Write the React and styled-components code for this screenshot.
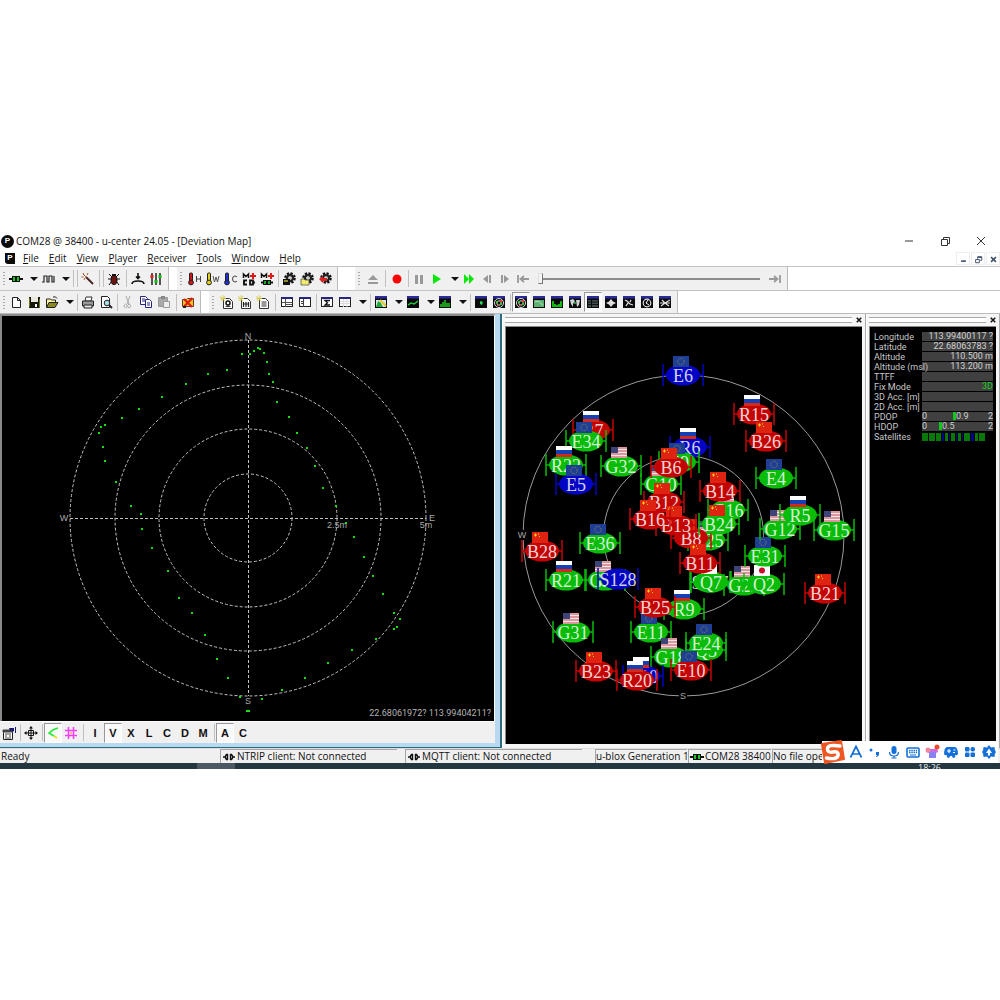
import React from "react";
import styled, { createGlobalStyle, css } from "styled-components";

const ui = '"Open Sans", "Noto Sans", sans-serif';
const plain = '"Liberation Sans", Arial, sans-serif';

const GlobalStyle = createGlobalStyle`
  * { box-sizing: border-box; }
  body { margin: 0; background: #fff; font-family: ${ui}; font-size: 10px; color: #111; }
  button { border: 0; background: none; padding: 0; margin: 0; font: inherit; color: inherit; }
`;

const Page = styled.main`
  padding-top: 232px;
  overflow: hidden;
`;
const AppWindow = styled.div`
  position: relative;
  display: flex;
  flex-direction: column;
`;

/* ---------- title and menu ---------- */
const TitleBar = styled.header`
  display: flex;
  align-items: center;
  height: 18px;
  padding: 0 1px;
`;
const Logo = styled.span`
  display: grid;
  place-items: center;
  width: ${(p) => (p.$square ? 10 : 13)}px;
  height: ${(p) => (p.$square ? 11 : 13)}px;
  margin-right: ${(p) => (p.$square ? 8 : 2)}px;
  border-radius: ${(p) => (p.$square ? "0 0 0 3px" : "50%")};
  background: #0b0b0b;
  color: #fff;
  font: bold 8px/10px ${plain};
`;
const Title = styled.h1`
  flex: 1;
  margin: 0;
  font-size: 10px;
  font-weight: 400;
  line-height: 18px;
  white-space: nowrap;
`;
const WindowButton = styled.button`
  display: grid;
  place-items: center;
  width: 36px;
  height: 18px;
  color: #222;
`;
const MenuBar = styled.nav`
  display: flex;
  align-items: center;
  height: 16px;
  padding-left: 5px;
`;
const MenuItem = styled.button`
  margin-right: 10px;
  line-height: 16px;
  &::first-letter { text-decoration: underline; }
`;
const MdiButtons = styled.div`
  display: flex;
  gap: 1px;
  margin-left: auto;
`;
const MdiButton = styled.button`
  display: grid;
  place-items: center;
  width: 14px;
  height: 13px;
  border: 1px solid #eee;
  color: #43526b;
`;

/* ---------- toolbars ---------- */
const ToolRow = styled.div`
  display: flex;
  height: ${(p) => p.$height || 23}px;
  border-top: 1px solid #c4c4c4;
`;
const ToolBand = styled.div`
  display: flex;
  align-items: center;
  padding: 0 3px 0 2px;
  margin-right: ${(p) => p.$gap || 0}px;
  background: #f0f0f0;
  border-right: 1px solid #bcbcbc;
`;
const Grip = styled.span`
  width: ${(p) => p.$width || 7}px;
  height: 15px;
  background: radial-gradient(circle, #aaa 1px, transparent 1px) 0 0 / 4px 3px repeat-y;
`;
const ToolButton = styled.button`
  display: grid;
  place-items: center;
  flex: none;
  width: ${(p) => (p.$drop ? 14 : 18)}px;
  height: 20px;
  font: bold 11px/18px ${plain};
  border: 1px solid transparent;
  ${(p) => p.$pressed && css`
    background: #f9f9f9;
    border-color: #999 #fff #fff #999;
  `}
`;
const Divider = styled.span`
  display: flex;
  justify-content: center;
  flex: none;
  width: ${(p) => (p.$wide ? 6 : 4)}px;
  height: 17px;
  &::before {
    content: "";
    border-left: 1px solid #c0c0c0;
  }
`;
const SeekBar = styled.input`
  appearance: none;
  width: 222px;
  height: 16px;
  margin: 0 6px;
  background: linear-gradient(#8c8c8c, #8c8c8c) center / 100% 2px no-repeat;
  &::-webkit-slider-thumb {
    appearance: none;
    width: 5px;
    height: 11px;
    background: #f4f4f4;
    border: 1px solid #777;
    border-color: #ddd #777 #777 #ddd;
  }
`;

/* ---------- workspace ---------- */
const Workspace = styled.div`
  display: grid;
  grid-template-columns: minmax(0, 1fr) 364px 134px;
  border-top: 1px solid #bbb;
  background: #f0f0f0;
`;
const MapWindow = styled.section`
  display: flex;
  flex-direction: column;
  border: solid #2c6a7d;
  border-width: 0 2px 1px 0;
  background: #b9d8f2;
  padding: 0 5px 4px 0;
`;
const MapCanvas = styled.svg`
  display: block;
  width: 100%;
  height: 407px;
  background: #000;
  border: solid #8a8a8a;
  border-width: 2px 0 0 2px;
  border-right: 1px solid #fff;
`;
const MapTools = styled.div`
  display: flex;
  align-items: center;
  height: 22px;
  background: #f0f0f0;
  border-top: 1px solid #fff;
`;
const Dock = styled.section`
  display: flex;
  flex-direction: column;
  padding: 0 0 4px 2px;
  border-left: 1px solid #fff;
  border-right: 1px solid #aaa;
  background: #f5f5f5;
`;
const DockHead = styled.header`
  display: flex;
  align-items: center;
  gap: 1px;
  height: 12px;
  &::before {
    content: "";
    flex: 1;
    height: 4px;
    border: solid #aaa;
    border-width: 1px 0;
    background: #fff;
  }
`;
const DockBody = styled.div`
  flex: 1;
  margin-right: 3px;
  background: #000;
  border: solid #888;
  border-width: 1px 0 0 1px;
  padding: ${(p) => (p.$inset ? "5px 3px 0 4px" : "0")};
`;
const SkyCanvas = styled.svg`
  display: block;
  width: 100%;
  height: 416px;
`;

const InfoTable = styled.table`
  width: 100%;
  border-collapse: collapse;
  table-layout: fixed;
  font: 9px/9px Roboto, ${plain};
  color: #c8c8c8;
  th, td { height: 10px; padding: 0; font-weight: 400; white-space: nowrap; }
  th { width: 48px; text-align: left; }
  td { text-align: right; }
`;
const Value = styled.div`
  height: 9px;
  margin-bottom: 1px;
  background: #404040;
  color: ${(p) => p.$color || "#d0d0d0"};
`;
const Gauge = styled(Value)`
  display: grid;
  grid-template-columns: ${(p) => p.$at}px 1fr auto;
  text-align: left;
  b { font-weight: 400; border-left: 3px solid #10c818; line-height: 9px; height: 8px; }
`;
const SatBars = styled.div`
  display: flex;
  gap: 1px;
  height: 8px;
`;
const SatBar = styled.i`
  width: ${(p) => p.$w}px;
  background: ${(p) => (p.$blue ? "#000090" : "#087808")};
`;

/* ---------- status bar, input bar, taskbar ---------- */
const StatusBar = styled.footer`
  display: flex;
  height: 15px;
  padding-right: 2px;
  background: #f0f0f0;
  border-top: 1px solid #ddd;
`;
const Pane = styled.div`
  display: flex;
  align-items: center;
  flex: ${(p) => (p.$w ? "none" : "1")};
  width: ${(p) => (p.$w ? p.$w + "px" : "auto")};
  margin-right: ${(p) => p.$gap || 0}px;
  padding-left: 1px;
  overflow: hidden;
  white-space: nowrap;
  line-height: 13px;
  ${(p) => p.$sunken && css`
    padding-left: 0;
    border: solid #a5a5a5;
    border-width: 1px 0 0 1px;
  `}
`;
const InputBar = styled.div`
  position: absolute;
  right: 2px;
  bottom: 6px;
  display: flex;
  align-items: center;
  height: 22px;
  padding-left: 24px;
  background: #fff;
`;
const InputLogo = styled.div`
  position: absolute;
  left: -2px;
  top: -2px;
`;
const InputButton = styled.button`
  display: grid;
  place-items: center;
  width: 19px;
  height: 22px;
`;
const Taskbar = styled.div`
  display: flex;
  height: 6px;
  overflow: hidden;
  background: #243640;
  color: #e4eaee;
  font: 9px/10px ${ui};
`;
const TaskSlot = styled.span`
  width: 38px;
  margin-left: 197px;
  background: #4d5962;
`;
const Clock = styled.span`
  margin-left: auto;
  margin-right: 59px;
`;

/* ---------- icons ---------- */
const plug = (
  <>
    <path d="M1 8h14" stroke="#111" strokeWidth="2" />
    <path d="M4 5h8v6H4z" fill="#111" />
    <path d="M5 6h2v4H5zM9 6h2v4H9z" fill="#18c828" />
  </>
);
const thermo = (color, letter) => (
  <>
    <rect x="2.500" y="2" width="3" height="9" rx="1" fill={color} stroke="#222" />
    <circle cx="4" cy="11.500" r="2.400" fill={color} stroke="#222" />
    {letter}
  </>
);
const screen = (inner) => (
  <>
    <rect x="2" y="3" width="12" height="11" fill="#0a0a0a" />
    <rect x="2" y="2" width="12" height="2.500" fill="#2c2c98" />
    {inner}
  </>
);
const gear = (inner) => (
  <>
    <circle cx="9" cy="7" r="4.600" fill="none" stroke="#111" strokeWidth="2.400" strokeDasharray="2.200 1.400" />
    <circle cx="9" cy="7" r="3" fill="none" stroke="#222" strokeWidth="2.400" />
    <circle cx="9" cy="7" r="1.500" fill="#ccc" />
    {inner}
  </>
);
const sheet = (inner) => (
  <>
    <path d="M4.500 4.500h6l3 3v7h-9z" fill="#fff" stroke="#333" />
    <path d="M1 2l5 5M6 2L2 7M4 1v6M1 4.500h6" stroke="#d4cc45" strokeWidth=".8" />
    {inner}
  </>
);
const pane = (inner) => (
  <>
    <rect x="2.500" y="3.500" width="11" height="9" fill="#fff" stroke="#222" />
    <rect x="2" y="3" width="12" height="2" fill="#252580" />
    {inner}
  </>
);
const dish = (
  <>
    <circle cx="8" cy="9" r="4.500" fill="none" stroke="#ddd" />
    <circle cx="8" cy="9" r="2.200" fill="none" stroke="#ddd" />
    <path d="M5 7h2v2H5zM9 9h2v2H9z" fill="#2bd12b" />
    <path d="M9 6h2v2H9zM6 11h2v1H6z" fill="#e33" />
  </>
);

const icons = {
  plug,
  drop: <path d="M4 6h8l-4 4z" fill="#111" />,
  wave: <path d="M2 11h2V5h3v6h2V5h3v6h2V5" fill="none" stroke="#222" strokeWidth="1.200" />,
  wand: (
    <>
      <path d="M6 6l7 7" stroke="#4a2525" strokeWidth="2" />
      <path d="M3 2l1 2M8 2L7 4M1.500 6h2M4 9l1-2M3 3l3 3" stroke="#a55a2a" strokeWidth="1" />
    </>
  ),
  bug: (
    <>
      <path d="M3 3l3 3M13 3l-3 3M2 8h12M3 14l3-4M13 14l-3-4" stroke="#111" />
      <ellipse cx="8" cy="9" rx="3" ry="4.500" fill="#6b1410" stroke="#111" />
      <path d="M6 3h4v2H6z" fill="#111" />
    </>
  ),
  antenna: <path d="M8 2v5M6 5.500l2 2 2-2M2 13q0-3 6-3t6 3" fill="none" stroke="#111" strokeWidth="1.600" />,
  sliders: (
    <>
      <path d="M4 2v12M8 2v12M12 2v12" stroke="#111" strokeWidth="1.400" />
      <path d="M2.500 4h3v3h-3z" fill="#d22" />
      <path d="M6.500 9h3v3h-3z" fill="#1b1" />
      <path d="M10.500 4h3v3h-3z" fill="#1b1" />
    </>
  ),
  thermoH: thermo("#d01818", <path d="M9.500 5v6M13.500 5v6M9.500 8h4" stroke="#444" fill="none" />),
  thermoW: thermo("#e0d020", <path d="M8 5l1.500 6L11 6l1.500 5L14 5" stroke="#555" fill="none" />),
  thermoC: thermo("#2030d0", <path d="M14 6q-1-1-2-1-2.500 0-2.500 3t2.500 3q1 0 2-1" stroke="#444" fill="none" />),
  linkAdd: (
    <>
      <path d="M2.500 7V3L5 5.500 7.500 3v4" fill="none" stroke="#111" strokeWidth="1.500" />
      <path d="M12 2v6M9 5h6" stroke="#e01818" strokeWidth="2" />
      <path d="M6 9.500H3v4h3M2 11.500h2M9 9.500h3v4H9zM12 11.500h2" fill="none" stroke="#111" strokeWidth="1.800" />
    </>
  ),
  linkGreen: (
    <>
      <path d="M2.500 7V3L5 5.500 7.500 3v4" fill="none" stroke="#111" strokeWidth="1.500" />
      <path d="M12 2v6M9 5h6" stroke="#e01818" strokeWidth="2" />
      <path d="M2 11.500h12" stroke="#111" strokeWidth="2" />
      <path d="M4 9h8v5H4z" fill="#111" />
      <path d="M5 10h2v3H5zM9 10h2v3H9z" fill="#18a828" />
    </>
  ),
  gearSave: gear(<><path d="M2 8h7v6H2z" fill="#111" /><path d="M3 9h4v2H3z" fill="#8a8a28" /></>),
  gearOpen: gear(<path d="M2 8h3l1 1h4v5H2z" fill="#f0ea70" stroke="#443" strokeWidth=".7" />),
  gearBack: gear(<path d="M2 8l4-3v2h4v3H6v2z" fill="#e02020" />),
  eject: <path d="M3 9l5-5 5 5zM3 11h10v2H3z" fill="#999" />,
  record: <circle cx="8" cy="8" r="4.500" fill="#f80606" />,
  pause: <path d="M4 4h3v9H4zM9 4h3v9H9z" fill="#999" />,
  play: <path d="M4 3l8 5-8 5z" fill="#08e808" />,
  forward: <path d="M3 3l5 5-5 5zM8 3l5 5-5 5z" fill="#08e808" />,
  stepBack: <path d="M9 4v8L4 8zM10 4h2v8h-2z" fill="#999" />,
  stepOn: <path d="M4 4h2v8H4zM7 4v8l5-4z" fill="#999" />,
  toStart: <path d="M3 4v8M14 8H6M9 5L5.500 8 9 11" fill="none" stroke="#999" strokeWidth="1.800" />,
  toEnd: <path d="M13 4v8M2 8h8M7 5l3.500 3L7 11" fill="none" stroke="#999" strokeWidth="1.800" />,
  page: <path d="M4.500 3.500h5l3 3v7h-8zM9.500 3.500v3h3" fill="#fff" stroke="#222" />,
  save: (
    <>
      <path d="M3 3h11v11H3z" fill="#16160a" />
      <path d="M5 3h7v5H5z" fill="#e8e8e0" />
      <path d="M3.500 4v9M13.500 5v9" stroke="#6d7414" />
      <path d="M9 10h2v3H9z" fill="#fff" />
    </>
  ),
  open: (
    <>
      <path d="M2.500 13V5h4l1 1h4v2" fill="#fbf6a0" stroke="#222" />
      <path d="M2.500 13.500L5 8.500h9l-3 5z" fill="#8b8b1c" stroke="#222" />
      <path d="M9 3q3-1 4 1.500" fill="none" stroke="#222" />
    </>
  ),
  print: (
    <>
      <path d="M5 7l1-4h6l-1 4z" fill="#fff" stroke="#333" />
      <path d="M2.500 7h11v5h-11z" fill="#9a9a9a" stroke="#222" />
      <path d="M4 11h8v3H4z" fill="#e4e4e4" stroke="#222" />
    </>
  ),
  preview: (
    <>
      <path d="M3.500 2.500h6l2 2v9h-8z" fill="#fff" stroke="#222" />
      <circle cx="9" cy="9" r="2.800" fill="#a8dfe2" stroke="#222" />
      <path d="M11 11l3 3" stroke="#222" strokeWidth="1.800" />
    </>
  ),
  cut: <path d="M6 2l3 8M10 2L7 10M6.500 10.500a1.500 1.800 0 1 0 0 3 1.500 1.800 0 0 0 0-3M10 10.500a1.500 1.800 0 1 0 0 3 1.500 1.800 0 0 0 0-3" fill="none" stroke="#aaa" />,
  copy: (
    <>
      <path d="M2.500 2.500h5l2 2v6h-7z" fill="#fff" stroke="#24247c" />
      <path d="M7.500 5.500h4l2 2v6h-6z" fill="#fff" stroke="#24247c" />
      <path d="M4 5h3M4 7h3M9 9h3M9 11h3" stroke="#24247c" />
    </>
  ),
  paste: (
    <>
      <path d="M2.500 3.500h9v9h-9z" fill="#aaa" stroke="#999" />
      <path d="M5 2h4v3H5z" fill="#888" />
      <path d="M7.500 7.500h6v6h-6z" fill="#eee" stroke="#999" />
    </>
  ),
  clear: (
    <>
      <path d="M2.500 5.500h4l1-1h6v8h-11z" fill="#e8c818" stroke="#733" />
      <path d="M4 5l8 8M12.500 4L4 12.500" stroke="#e01818" strokeWidth="2.200" />
      <path d="M3 12h3v2H3z" fill="#222" />
    </>
  ),
  sheetImage: sheet(<><circle cx="9" cy="9" r="2" fill="none" stroke="#111" strokeWidth="1.500" /><path d="M6 13l3-2 3 2z" fill="#333" /></>),
  sheetCode: sheet(<path d="M6.500 8v5M9 8v5M11.500 8v5M6 10h6" stroke="#222" strokeWidth="1.200" />),
  sheetText: sheet(<path d="M6.500 8h5M6.500 10h5M6.500 12h5" stroke="#333" />),
  paneRows: pane(<path d="M6.500 5v8M3 8.500h10M7 10.500h6" stroke="#555" fill="none" />),
  paneSide: pane(<path d="M6.500 5v8M4 7.500h2M4 9.500h2" stroke="#444" fill="none" />),
  paneSum: pane(<path d="M11 6.500H6l2.500 2.200L6 11h5" fill="none" stroke="#111" strokeWidth="1.300" />),
  paneGrid: pane(<path d="M3 7.500h10M3 9.500h10M6.500 5v8M10 5v8" stroke="#ddd" />),
  chart: screen(<><path d="M3 6h10v7H3z" fill="#d8ecf0" /><path d="M3 13l2-6 3 2 2 4z" fill="#22a838" /><path d="M7 6l6 6" stroke="#e8c820" strokeWidth="2" /></>),
  line: screen(<path d="M3 11l3-2 3 1 4-3" fill="none" stroke="#20d840" strokeWidth="1.300" />),
  bars: screen(<path d="M4 13v-3M6 13V8M8 13V6M10 13V9M12 13v-4" stroke="#20d820" strokeWidth="1.400" />),
  dot: screen(<path d="M7 7l3 1-1 3-2-1z" fill="#20d860" />),
  sky: screen(dish),
  map: screen(<><path d="M3 6h10v7H3z" fill="#5fb073" /><path d="M4 8l3-1 5 4" stroke="#bde0b8" fill="none" /></>),
  histogram: screen(<path d="M4 13V7M6 13v-3M8 13v-2M10 13v-3M12 13V7" stroke="#12e812" strokeWidth="1.600" />),
  world: screen(<><path d="M3 6l3-1 2 2-2 3v3l-2-3zM9 6l4 0-1 5-2 2z" fill="#cfcfcf" /><path d="M7 8h2v2H7z" fill="#27903a" /></>),
  table: screen(<><path d="M3 6h3v7H3zM7 6h6v7H7z" fill="#3e4e4e" /><path d="M3 8h10M3 10.500h10" stroke="#141414" /></>),
  compass: screen(<path d="M8 5l2 2.500 3 1.500-3 1.500L8 13l-2-2.500L3 9l3-1.500z" fill="#e0e0e0" />),
  needle: screen(<path d="M4 6l2 1 3 3 3 1M5 12l2-3M10 6l-1 2" stroke="#e0e0e0" fill="none" strokeWidth="1.300" />),
  clock: screen(<><circle cx="8" cy="9" r="3.800" fill="none" stroke="#ddd" strokeWidth="1.200" /><path d="M9 6L7 9l3 2" stroke="#fff" fill="none" /></>),
  star: screen(<path d="M4 12l4-3 5-3M5 6l3 3 4 3M3 9h10" stroke="#ddd" fill="none" strokeWidth="1.200" />),
  props: (
    <>
      <path d="M2.500 5.500h9v9h-9z" fill="#fff" stroke="#222" />
      <path d="M2 5h10v2H2zM4 9h6M4 11h2M8 11h2M4 13h6" fill="#444" stroke="#444" />
      <path d="M8 3h5v3h-4zM14 2h1v6h-1z" fill="#1a1a6e" />
    </>
  ),
  move: (
    <>
      <path d="M8 2v12M2 8h12M5.500 5.500h5v5h-5z" stroke="#111" fill="none" />
      <path d="M8 1l2 2.500H6zM8 15l2-2.500H6zM1 8l2.500-2v4zM15 8l-2.500-2v4z" fill="#111" />
    </>
  ),
  track: <><path d="M13 3Q8 4 4 8l5 3" fill="none" stroke="#24e83a" strokeWidth="1.600" /><path d="M9 11l3 2" stroke="#e6e020" strokeWidth="2" /></>,
  grid: <><path d="M5.500 2v12M10.500 2v12M2 5.500h12M2 10.500h12" stroke="#f53cf5" strokeWidth="1.500" /><path d="M7 7h2v2H7z" fill="#f6c060" /></>,
  unlinked: <path d="M2 8h2M12 8h2M7 5.500H5.500L4.500 7v2l1 1.500H7M6.500 5v6M9.500 5v6M9 5.500h1.500l1 1.500v2l-1 1.500H9" fill="none" stroke="#111" strokeWidth="1.400" />,
  minimize: <path d="M4 8h8" stroke="#333" />,
  restore: <path d="M4.500 6.500h6v6h-6zM6.500 6V4.500h6v6H11" fill="none" stroke="#333" />,
  close: <path d="M4 4l8 8M12 4l-8 8" stroke="#333" />,
  mdiMin: <path d="M5 10h6" stroke="#43526b" strokeWidth="2" />,
  mdiRestore: <path d="M4.500 8h4.500v4H4.500zM7 7V4.500h5v4.500h-2M7 5.500h5" fill="none" stroke="#43526b" strokeWidth="1.200" />,
  mdiClose: <path d="M5 5l6 6M11 5l-6 6" stroke="#43526b" strokeWidth="2" />,
  dockClose: <path d="M5 5l6 6M11 5l-6 6" stroke="#111" strokeWidth="2" />,
  imeA: <path d="M2.500 13.500L8 2.500l5.500 11M4.500 10h7" fill="none" stroke="#1470d8" strokeWidth="1.700" />,
  imePunct: <><circle cx="4" cy="6" r="1.500" fill="#1470d8" /><path d="M9 8h3v3l-2 2h-1l1-2H9z" fill="#1470d8" /></>,
  imeMic: <><rect x="5.500" y="2" width="5" height="8" rx="2.500" fill="#1470d8" /><path d="M3.500 8q0 4 4.500 4t4.500-4M8 12v2.500M5.500 14h5" fill="none" stroke="#1470d8" strokeWidth="1.200" /></>,
  imeKeys: <><rect x="2" y="4" width="12" height="9" rx="1" fill="none" stroke="#1470d8" strokeWidth="1.600" /><path d="M4 6.500h8M4 8.500h8" stroke="#1470d8" strokeDasharray="1.500 .8" strokeWidth="1.300" /><path d="M5 11h6" stroke="#1470d8" /></>,
  imeSkin: <><path d="M2 4l4 1h4l3-1 1 4-2 1v5H5V9L2 8z" fill="#cc6ae0" /><path d="M5 8h7v6H5z" fill="#8a80f0" /><circle cx="4" cy="6" r="2.500" fill="#f08a9a" /><circle cx="13" cy="3" r="2.500" fill="#f04a2c" /></>,
  imeGame: <><path d="M4 3h8q3 1 3 7-1 2-3 1 1 2-1 3-2 0-2-2H7q0 2-2 2-2-1-1-3-2 1-3-1 0-6 3-7z" fill="#1470d8" /><path d="M4 7h4M6 5v4M10.500 6h2M10 8.500h2" stroke="#fff" strokeWidth="1.200" /></>,
  imeApps: <g fill="#1470d8"><rect x="3" y="3" width="4.500" height="4.500" rx="1" /><rect x="8.500" y="3" width="4.500" height="4.500" rx="2" /><rect x="3" y="8.500" width="4.500" height="4.500" rx="1" /><rect x="8.500" y="8.500" width="4.500" height="4.500" rx="1" /></g>,
  imeGear: <><path d="M8 1l2 2.500 3.500-.5.300 3L15 8l-1.200 2-.300 3-3.500-.5L8 15l-2-2.500-3.500.5-.300-3L1 8l1.200-2 .300-3 3.500.5z" fill="#1470d8" /><path d="M8 4.500L11 9H9v2.500H7V9H5z" fill="#fff" /></>,
};

const Glyph = styled.svg`
  display: block;
  flex: none;
  width: ${(p) => p.$size || 16}px;
  height: ${(p) => p.$size || 16}px;
`;
const Icon = ({ name, size }) => (
  <Glyph viewBox="0 0 16 16" $size={size} aria-hidden="true">{icons[name]}</Glyph>
);

/* "|" and "||" draw a narrow and a wide divider, a leading "*" marks a pressed button */
const Tools = ({ items }) =>
  items.split(" ").map((item, i) => {
    if (item[0] === "|") return <Divider key={i} $wide={item === "||"} />;
    const pressed = item[0] === "*";
    const name = pressed ? item.slice(1) : item;
    return (
      <ToolButton key={i} type="button" aria-label={name} aria-pressed={pressed} $pressed={pressed} $drop={name === "drop"}>
        {icons[name] ? <Icon name={name} /> : name}
      </ToolButton>
    );
  });

/* ---------- deviation map ---------- */
const fixes = [
  [258, 348], [260, 349], [254, 351], [264, 353], [242, 354], [250, 354], [267, 362], [227, 370], [208, 374], [269, 374],
  [186, 384], [273, 382], [162, 397], [277, 402], [139, 409], [122, 418], [289, 417], [105, 425], [101, 427],
  [297, 433], [99, 433], [103, 447], [307, 448], [105, 461], [315, 466], [116, 482], [323, 488], [131, 506],
  [336, 506], [141, 514], [346, 523], [142, 529], [354, 537], [152, 548], [364, 557], [168, 571], [373, 576],
  [179, 598], [383, 594], [192, 613], [394, 613], [400, 619], [397, 627], [394, 629], [205, 635], [376, 639],
  [352, 650], [217, 659], [328, 663], [305, 678], [228, 678], [282, 690], [240, 697], [262, 699],
];

const DeviationMap = () => (
  <MapCanvas viewBox="2 316 492 405" role="img" aria-label="Deviation Map">
    <g fill="none" stroke="#c4c4c4" strokeDasharray="3 2">
      {[44, 89, 133, 178].map((r) => <circle key={r} cx="248" cy="518" r={r} />)}
      <path d="M70 518.500h356M248.500 340v356" />
    </g>
    <g fill="#a8a8a8" fontFamily={plain} fontSize="9" textAnchor="middle">
      <text x="248" y="339">N</text>
      <text x="64" y="521">W</text>
      <text x="432" y="521">E</text>
      <text x="248" y="704">S</text>
      <text x="337" y="528">2.5m</text>
      <text x="426" y="528">5m</text>
    </g>
    <g fill="#10e010">
      {fixes.map(([x, y]) => <rect key={x + "-" + y} x={x - 1} y={y - 1} width="2" height="2" />)}
      <rect x="246" y="710" width="4" height="2" />
    </g>
    <text x="491" y="716" fill="#b4b4b4" fontFamily="Roboto, sans-serif" fontSize="9" textAnchor="end">22.68061972? 113.99404211?</text>
  </MapCanvas>
);

/* ---------- sky view ---------- */
const tones = { g: "#08bc08", r: "#c40404", b: "#0404c4" };
const flagParts = {
  E: <><rect width="16" height="11" fill="#1f3f94" /><circle cx="8" cy="5.500" r="3.200" fill="none" stroke="#8a8a50" strokeDasharray="1 1" /></>,
  B: <><rect width="16" height="11" fill="#de2410" /><path d="M2 3h3M3.500 1.500v3M6.500 1.500v1M7.500 4v1" stroke="#ffd21c" /></>,
  R: <><rect width="16" height="4" fill="#fff" /><rect y="4" width="16" height="4" fill="#1540b4" /><rect y="8" width="16" height="3" fill="#d42818" /></>,
  G: <><rect width="16" height="11" fill="#f4e4e4" /><path d="M0 1h16M0 4h16M0 7h16M0 10h16" stroke="#c4485a" strokeWidth="1.200" /><rect width="7" height="6" fill="#3c4478" /></>,
  Q: <><rect width="16" height="11" fill="#fff" /><circle cx="8" cy="5.500" r="3" fill="#c8102e" /></>,
};
const satellites = [
  ["E6", 683, 375, "b"], ["R7", 593, 430, "r"], ["E34", 586, 441, "g"], ["R22", 566, 465, "g"], ["E5", 576, 484, "b"],
  ["G32", 621, 466, "g"], ["R6", 690, 447, "b"], ["E9", 679, 462, "g"], ["G10", 661, 484, "g"], ["B6", 671, 467, "r"],
  ["G25", 708, 540, "g"], ["B8", 691, 538, "r"], ["B12", 664, 502, "r"], ["B13", 676, 525, "r"], ["B16", 650, 519, "r"],
  ["G16", 728, 510, "g"], ["B14", 720, 491, "r"], ["B24", 719, 524, "g"], ["S137", 710, 582, "g"], ["Q7", 711, 582, "g"],
  ["B11", 700, 563, "r"], ["G29", 744, 585, "g"], ["Q2", 764, 584, "g"], ["E31", 765, 556, "g"], ["G12", 780, 529, "g"],
  ["R5", 800, 515, "g"], ["G15", 834, 530, "g"], ["E4", 776, 478, "g"], ["R15", 754, 414, "r"], ["B26", 766, 441, "r"],
  ["E36", 600, 543, "g"], ["B28", 542, 551, "r"], ["R21", 566, 580, "g"], ["G26", 605, 580, "g"], ["S128", 618, 579, "b"],
  ["E11", 651, 632, "g"], ["R9", 684, 609, "g"], ["B25", 655, 607, "r"], ["G31", 573, 632, "g"], ["G18", 671, 657, "g"],
  ["Q3", 706, 650, "g"], ["E24", 706, 643, "g"], ["E10", 691, 670, "r"], ["B23", 596, 671, "r"], ["R10", 643, 676, "b"],
  ["R20", 637, 680, "r"], ["B21", 825, 593, "r"],
];

const Satellite = ({ id, x, y, tone }) => (
  <g transform={`translate(${x} ${y})`}>
    <path d="M-20 -11v22M20 -11v22M-20 0h40" stroke={tones[tone]} strokeWidth="1.500" />
    <ellipse rx="17" ry="10.500" fill={tones[tone]} />
    {flagParts[id[0]] && <g transform="translate(-10 -19)">{flagParts[id[0]]}</g>}
    <text y="7" textAnchor="middle" fill="#fff" fillOpacity=".84" fontFamily='"Liberation Serif", serif' fontSize="18">{id}</text>
  </g>
);

const SkyView = () => (
  <SkyCanvas viewBox="506 327 356 416" role="img" aria-label="Sky view">
    <g fill="none" stroke="#9a9a9a">
      <circle cx="683.500" cy="535.500" r="160.500" />
      <circle cx="683.500" cy="535.500" r="80" />
    </g>
    <path d="M518 530h8v10h-8zM679 690h8v10h-8z" fill="#000" />
    <g fill="#a8a8a8" fontFamily={plain} fontSize="9" textAnchor="middle">
      <text x="522" y="538">W</text>
      <text x="683" y="699">S</text>
    </g>
    {satellites.map(([id, x, y, tone]) => <Satellite key={id} id={id} x={x} y={y} tone={tone} />)}
  </SkyCanvas>
);

/* ---------- receiver data ---------- */
const readings = [
  ["Longitude", "113.99400117 ?"], ["Latitude", "22.68063783 ?"], ["Altitude", "110.500 m"],
  ["Altitude (msl)", "113.200 m"], ["TTFF", ""], ["Fix Mode", "3D", "#18d020"], ["3D Acc. [m]", ""], ["2D Acc. [m]", ""],
];
const satBars = [[6], [6], [5], [2, 1], [3], [1, 1], [4], [1, 1], [3], [1, 1], [6], [3, 1], [3], [6]];

const ReceiverData = () => (
  <InfoTable>
    <tbody>
      {readings.map(([label, value, color]) => (
        <tr key={label}><th scope="row">{label}</th><td><Value $color={color}>{value}</Value></td></tr>
      ))}
      <tr><th scope="row">PDOP</th><td><Gauge $at={31}><span>0</span><b>0.9</b><span>2</span></Gauge></td></tr>
      <tr><th scope="row">HDOP</th><td><Gauge $at={17}><span>0</span><b>0.5</b><span>2</span></Gauge></td></tr>
      <tr>
        <th scope="row">Satellites</th>
        <td><SatBars>{satBars.map(([w, blue], i) => <SatBar key={i} $w={w} $blue={blue} />)}</SatBars></td>
      </tr>
    </tbody>
  </InfoTable>
);

const DockPanel = ({ title, inset, children }) => (
  <Dock aria-label={title}>
    <DockHead>
      <button type="button" aria-label={"Close " + title}><Icon name="dockClose" size={12} /></button>
    </DockHead>
    <DockBody $inset={inset}>{children}</DockBody>
  </Dock>
);

export default function App() {
  return (
    <Page>
      <GlobalStyle />
      <AppWindow>
        <TitleBar>
          <Logo>P</Logo>
          <Title>COM28 @ 38400 - u-center 24.05 - [Deviation Map]</Title>
          {["minimize", "restore", "close"].map((n) => (
            <WindowButton key={n} type="button" aria-label={n}><Icon name={n} /></WindowButton>
          ))}
        </TitleBar>
        <MenuBar>
          <Logo $square>P</Logo>
          {["File", "Edit", "View", "Player", "Receiver", "Tools", "Window", "Help"].map((m) => (
            <MenuItem key={m} type="button">{m}</MenuItem>
          ))}
          <MdiButtons>
            {["mdiMin", "mdiRestore", "mdiClose"].map((n) => (
              <MdiButton key={n} type="button" aria-label={n}><Icon name={n} size={13} /></MdiButton>
            ))}
          </MdiButtons>
        </MenuBar>

        <ToolRow $height={24}>
          <ToolBand $gap={8}>
            <Grip $width={5} />
            <Tools items="plug drop wave drop | | wand | | bug || antenna sliders" />
          </ToolBand>
          <ToolBand $gap={17}>
            <Grip />
            <Tools items="thermoH thermoW thermoC linkAdd linkGreen | gearSave gearOpen gearBack" />
          </ToolBand>
          <ToolBand>
            <Grip />
            <Tools items="eject || record | pause play drop forward stepBack stepOn toStart" />
            <SeekBar type="range" min="0" max="100" defaultValue="0" aria-label="Position" />
            <Tools items="toEnd" />
          </ToolBand>
        </ToolRow>
        <ToolRow>
          <ToolBand $gap={8}>
            <Grip $width={5} />
            <Tools items="page save open drop | print preview | cut copy paste || clear" />
          </ToolBand>
          <ToolBand>
            <Grip />
            <Tools items="sheetImage sheetCode sheetText || paneRows paneSide | paneSum paneGrid drop | chart drop line drop bars drop | dot sky | *sky map histogram world *table compass needle clock star" />
          </ToolBand>
        </ToolRow>

        <Workspace>
          <MapWindow aria-label="Deviation Map">
            <DeviationMap />
            <MapTools>
              <Tools items="props | move | *track grid || I *V X L C D M | *A C" />
            </MapTools>
          </MapWindow>
          <DockPanel title="Satellite Position"><SkyView /></DockPanel>
          <DockPanel title="Data" inset><ReceiverData /></DockPanel>
        </Workspace>

        <StatusBar>
          <Pane $w={220}>Ready</Pane>
          <Pane $w={177} $gap={8} $sunken><Icon name="unlinked" />NTRIP client: Not connected</Pane>
          <Pane $w={177} $gap={13} $sunken><Icon name="unlinked" />MQTT client: Not connected</Pane>
          <Pane $w={92} $gap={1} $sunken>u-blox Generation 10</Pane>
          <Pane $w={83} $gap={1} $sunken><Icon name="plug" />COM28 38400</Pane>
          <Pane $sunken>No file open</Pane>
        </StatusBar>
        <Taskbar><TaskSlot /><Clock>18:26</Clock></Taskbar>

        <InputBar>
          <InputLogo>
            <svg width="26" height="26" viewBox="0 0 26 26" aria-hidden="true">
              <path d="M2 5L21 2l3 18L5 24z" fill="#ee5622" stroke="#ee5622" strokeWidth="2" strokeLinejoin="round" />
              <path d="M20 7Q8 5 7.500 9.500T13 13t5 3.500T6.500 19" fill="none" stroke="#fff" strokeWidth="3.500" strokeLinecap="round" />
            </svg>
          </InputLogo>
          {["imeA", "imePunct", "imeMic", "imeKeys", "imeSkin", "imeGame", "imeApps", "imeGear"].map((n) => (
            <InputButton key={n} type="button" aria-label={n}><Icon name={n} /></InputButton>
          ))}
        </InputBar>
      </AppWindow>
    </Page>
  );
}
